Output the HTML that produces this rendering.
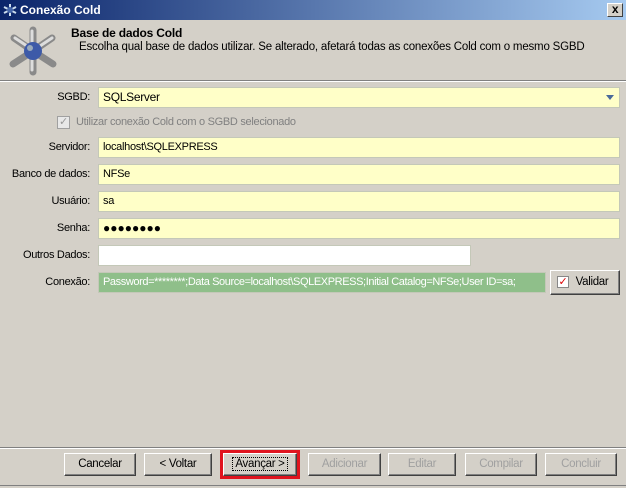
<!DOCTYPE html>
<html><head><meta charset="utf-8"><style>
*{box-sizing:border-box;margin:0;padding:0}
body{width:626px;height:488px;background:#d4d0c8;font-family:"Liberation Sans",sans-serif;font-size:11px;color:#000;position:relative;overflow:hidden;letter-spacing:-0.3px}
.abs{position:absolute}
.title{left:0;top:0;width:626px;height:20px;background:linear-gradient(90deg,#0a246a,#a6caf0);color:#fff;font-weight:bold;font-size:12px;line-height:20px;padding-left:20px;letter-spacing:0}
.x{right:3px;top:3px;width:16px;height:14px;background:#d4d0c8;border:1px solid;border-color:#fff #404040 #404040 #fff;color:#000;font-size:12px;line-height:11px;text-align:center;font-weight:bold}
.lbl{text-align:right;width:90px;left:0;line-height:20px}
.in{background:#ffffc8;border:1px solid #c4c8b8;line-height:19px;padding-left:4px;height:21px}
.btn{top:453px;height:23px;border:1px solid;border-color:#fff #404040 #404040 #fff;box-shadow:inset -1px -1px #808080;text-align:center;line-height:21px;font-size:11.5px}
.dis{color:#a0a0a0}
</style></head><body>
<div class="abs title">Conexão Cold</div>
<svg class="abs" style="left:3px;top:3px" width="14" height="14"><g stroke="#cde" stroke-width="2"><line x1="7" y1="1" x2="7" y2="13"/><line x1="1" y1="4" x2="13" y2="10"/><line x1="1" y1="10" x2="13" y2="4"/></g><circle cx="7" cy="7" r="3" fill="#46a"/></svg>
<div class="abs x">x</div>
<svg class="abs" style="left:8px;top:26px" width="50" height="50"><g stroke="#8a8a8a" stroke-width="7" stroke-linecap="round"><line x1="25" y1="4" x2="25" y2="46"/><line x1="6" y1="12" x2="25" y2="25"/><line x1="44" y1="12" x2="25" y2="25"/><line x1="5" y1="38" x2="25" y2="25"/><line x1="45" y1="38" x2="25" y2="25"/></g><g stroke="#ddd" stroke-width="3" stroke-linecap="round"><line x1="24" y1="5" x2="24" y2="44"/><line x1="7" y1="12" x2="25" y2="24"/><line x1="44" y1="12" x2="26" y2="24"/></g><circle cx="25" cy="25" r="9" fill="#3d5aa8"/><circle cx="22" cy="22" r="3" fill="#9ab"/></svg>
<div class="abs" style="left:71px;top:26px;font-weight:bold;font-size:12px;letter-spacing:-0.2px">Base de dados Cold</div>
<div class="abs" style="left:79px;top:41px;font-size:11.5px;white-space:nowrap;letter-spacing:-0.2px">Escolha qual base de dados utilizar. Se alterado, afetará todas as conexões Cold com o mesmo SGBD</div>
<div class="abs" style="left:0;top:80px;width:626px;height:2px;border-top:1px solid #808080;border-bottom:1px solid #fff"></div>
<div class="abs lbl" style="top:87px">SGBD:</div>
<div class="abs in" style="left:98px;top:87px;width:522px;font-size:12px">SQLServer</div>
<div class="abs" style="left:606px;top:95px;width:0;height:0;border:4px solid transparent;border-top:5px solid #4a6a9a"></div>
<div class="abs" style="left:57px;top:116px;width:13px;height:13px;border:1px solid #a0a0a0;background:#e8e8e8;color:#999;font-size:11px;line-height:11px;text-align:center">✓</div>
<div class="abs" style="left:76px;top:116px;color:#808080">Utilizar conexão Cold com o SGBD selecionado</div>
<div class="abs lbl" style="top:137px">Servidor:</div>
<div class="abs in" style="left:98px;top:137px;width:522px">localhost\SQLEXPRESS</div>
<div class="abs lbl" style="top:164px">Banco de dados:</div>
<div class="abs in" style="left:98px;top:164px;width:522px">NFSe</div>
<div class="abs lbl" style="top:191px">Usuário:</div>
<div class="abs in" style="left:98px;top:191px;width:522px">sa</div>
<div class="abs lbl" style="top:218px">Senha:</div>
<div class="abs in" style="left:98px;top:218px;width:522px;font-size:12px;letter-spacing:0">●●●●●●●●</div>
<div class="abs lbl" style="top:245px">Outros Dados:</div>
<div class="abs in" style="left:98px;top:245px;width:373px;background:#fff"></div>
<div class="abs lbl" style="top:272px">Conexão:</div>
<div class="abs in" style="left:98px;top:272px;width:448px;background:#8fbf8a;color:#fff;white-space:nowrap;overflow:hidden;letter-spacing:-0.4px">Password=********;Data Source=localhost\SQLEXPRESS;Initial Catalog=NFSe;User ID=sa;</div>
<div class="abs btn" style="left:550px;top:270px;width:70px;height:25px;line-height:23px;padding-left:14px">Validar</div>
<div class="abs" style="left:557px;top:276px;width:12px;height:12px;border:1px solid #888;background:#fff;color:#d00;font-size:11px;line-height:10px;text-align:center">✓</div>
<div class="abs" style="left:0;top:447px;width:626px;height:2px;border-top:1px solid #808080;border-bottom:1px solid #fff"></div>
<div class="abs btn" style="left:64px;width:72px">Cancelar</div>
<div class="abs btn" style="left:144px;width:68px">&lt; Voltar</div>
<div class="abs" style="left:220px;top:450px;width:80px;height:29px;border:3px solid #e0141e"></div>
<div class="abs btn" style="left:223px;width:74px"><span style="outline:1px dotted #000;padding:0 2px">Avançar &gt;</span></div>
<div class="abs btn dis" style="left:308px;width:73px">Adicionar</div>
<div class="abs btn dis" style="left:388px;width:68px">Editar</div>
<div class="abs btn dis" style="left:465px;width:72px">Compilar</div>
<div class="abs btn dis" style="left:545px;width:72px">Concluir</div>
<div class="abs" style="left:0;top:485px;width:626px;height:1px;background:#808080"></div>
</body></html>
